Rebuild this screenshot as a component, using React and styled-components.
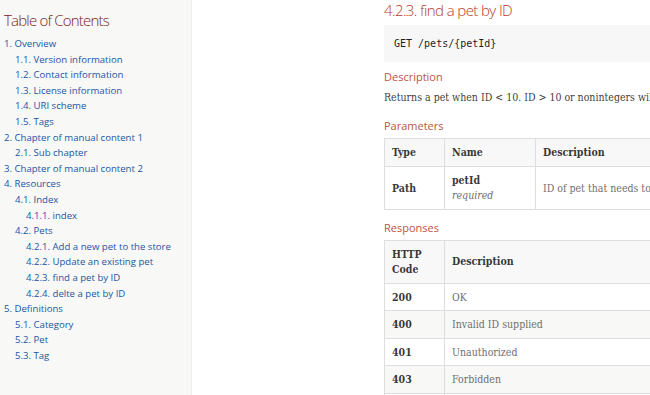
import React from "react";
import styled, { createGlobalStyle } from "styled-components";

const GlobalStyle = createGlobalStyle`
  html, body {
    margin: 0;
    padding: 0;
    background: #fff;
    overflow: hidden;
  }
  body {
    font-family: "DejaVu Serif", "Liberation Serif", serif;
    color: rgba(0, 0, 0, 0.8);
  }
`;

const Page = styled.div`
  display: flex;
  width: 650px;
  height: 395px;
  overflow: hidden;
`;

const Sidebar = styled.nav`
  flex: 0 0 192px;
  background: #f8f8f7;
  border-right: 1px solid #efefed;
  padding: 10px 0 0 4px;
  box-sizing: border-box;
`;

const TocTitle = styled.div`
  font-family: "Open Sans", sans-serif;
  font-weight: 300;
  font-size: 15px;
  letter-spacing: -0.8px;
  line-height: 20px;
  color: #7a2518;
  margin-bottom: 6px;
`;

const TocList = styled.ul`
  list-style: none;
  margin: 0;
  padding: 0 0 0 ${(p) => (p.$nested ? 11 : 0)}px;
`;

const TocItem = styled.li`
  font-family: "Open Sans", sans-serif;
  font-size: 9.6px;
  line-height: 15.6px;
  color: #2156a5;
  white-space: nowrap;
`;

const Main = styled.main`
  flex: 0 0 auto;
  width: 460px;
  margin-left: 192px;
`;

const Heading = styled.h4`
  margin: 0;
  font-family: "Open Sans", sans-serif;
  font-weight: 300;
  font-size: 15px;
  letter-spacing: -0.6px;
  line-height: 20px;
  color: #ba3925;
`;

const Listing = styled.pre`
  margin: 5px 0 0;
  background: #f7f7f8;
  padding: 12px 10px;
  font-family: "DejaVu Sans Mono", "Liberation Mono", monospace;
  font-size: 10px;
  line-height: 13px;
  color: rgba(0, 0, 0, 0.9);
`;

const SubTitle = styled.h5`
  margin: ${(p) => p.$top}px 0 0;
  font-family: "Open Sans", sans-serif;
  font-weight: 400;
  font-size: 11px;
  line-height: 16px;
  color: #c0533f;
`;

const Para = styled.p`
  margin: 4px 0 0;
  font-size: 10.5px;
  font-stretch: condensed;
  line-height: 16px;
  white-space: nowrap;
`;

const Table = styled.table`
  margin-top: 4px;
  width: 420px;
  border-collapse: collapse;
  border: 1px solid #dedede;
  table-layout: fixed;
  font-size: 10.5px;
  font-stretch: condensed;
  line-height: 15px;
`;

const Th = styled.th`
  box-sizing: border-box;
  background: #f7f8f7;
  border: 1px solid #dedede;
  padding: 6px 7px;
  text-align: left;
  vertical-align: middle;
  font-weight: bold;
  color: rgba(0, 0, 0, 0.8);
  width: ${(p) => (p.$w ? `${p.$w}px` : "auto")};
`;

const Tr = styled.tr`
  &:nth-of-type(even) {
    background: #f8f8f7;
  }
`;

const Td = styled.td`
  border: 1px solid #dedede;
  padding: 6px 7px 5.5px;
  vertical-align: middle;
  color: ${(p) => (p.$strong ? "rgba(0,0,0,0.8)" : "#6f6f6f")};
  font-weight: ${(p) => (p.$strong ? "bold" : "normal")};
`;

const Name = styled.div`
  font-weight: bold;
  color: rgba(0, 0, 0, 0.8);
`;

const Req = styled.div`
  font-style: italic;
  color: #6f6f6f;
`;

const toc = [
  ["1. Overview", [
    ["1.1. Version information"],
    ["1.2. Contact information"],
    ["1.3. License information"],
    ["1.4. URI scheme"],
    ["1.5. Tags"],
  ]],
  ["2. Chapter of manual content 1", [["2.1. Sub chapter"]]],
  ["3. Chapter of manual content 2"],
  ["4. Resources", [
    ["4.1. Index", [["4.1.1. index"]]],
    ["4.2. Pets", [
      ["4.2.1. Add a new pet to the store"],
      ["4.2.2. Update an existing pet"],
      ["4.2.3. find a pet by ID"],
      ["4.2.4. delte a pet by ID"],
    ]],
  ]],
  ["5. Definitions", [["5.1. Category"], ["5.2. Pet"], ["5.3. Tag"]]],
];

const Toc = ({ items, nested }) => (
  <TocList $nested={nested}>
    {items.map(([label, children]) => (
      <TocItem key={label}>
        {label}
        {children && <Toc items={children} nested />}
      </TocItem>
    ))}
  </TocList>
);

const responses = [
  ["200", "OK"],
  ["400", "Invalid ID supplied"],
  ["401", "Unauthorized"],
  ["403", "Forbidden"],
  ["404", "Pet not found"],
];

export default function App() {
  return (
    <>
      <GlobalStyle />
      <Page>
        <Sidebar>
          <TocTitle>Table of Contents</TocTitle>
          <Toc items={toc} />
        </Sidebar>
        <Main>
          <Heading>4.2.3. find a pet by ID</Heading>
          <Listing>GET /pets/{"{petId}"}</Listing>
          <SubTitle $top={7}>Description</SubTitle>
          <Para>
            Returns a pet when ID &lt; 10. ID &gt; 10 or nonintegers will simulate API error conditions
          </Para>
          <SubTitle $top={13}>Parameters</SubTitle>
          <Table>
            <thead>
              <tr>
                <Th $w={60}>Type</Th>
                <Th $w={91}>Name</Th>
                <Th>Description</Th>
              </tr>
            </thead>
            <tbody>
              <tr>
                <Td $strong>Path</Td>
                <Td>
                  <Name>petId</Name>
                  <Req>required</Req>
                </Td>
                <Td>ID of pet that needs to be fetched</Td>
              </tr>
            </tbody>
          </Table>
          <SubTitle $top={10}>Responses</SubTitle>
          <Table>
            <thead>
              <tr>
                <Th $w={60}>HTTP Code</Th>
                <Th>Description</Th>
              </tr>
            </thead>
            <tbody>
              {responses.map(([code, desc]) => (
                <Tr key={code}>
                  <Td $strong>{code}</Td>
                  <Td>{desc}</Td>
                </Tr>
              ))}
            </tbody>
          </Table>
        </Main>
      </Page>
    </>
  );
}
